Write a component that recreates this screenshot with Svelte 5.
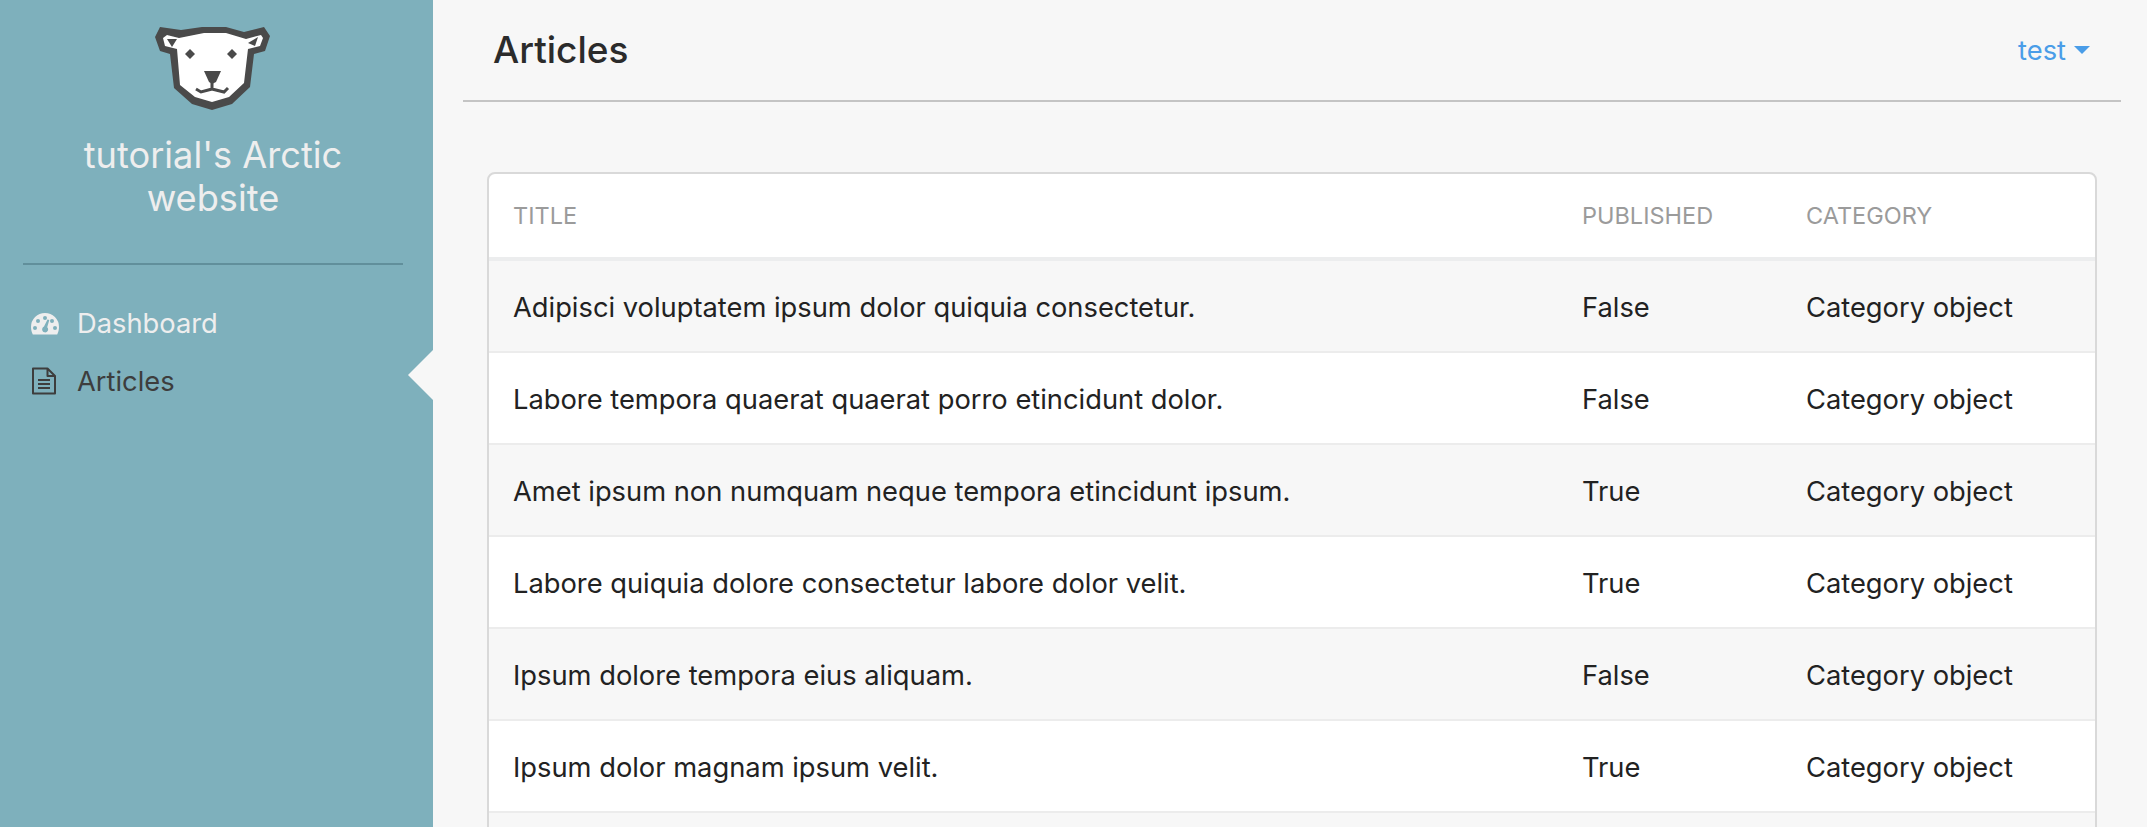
<script>
	const rows = [
		{ title: 'Adipisci voluptatem ipsum dolor quiquia consectetur.', published: 'False' },
		{ title: 'Labore tempora quaerat quaerat porro etincidunt dolor.', published: 'False' },
		{ title: 'Amet ipsum non numquam neque tempora etincidunt ipsum.', published: 'True' },
		{ title: 'Labore quiquia dolore consectetur labore dolor velit.', published: 'True' },
		{ title: 'Ipsum dolore tempora eius aliquam.', published: 'False' },
		{ title: 'Ipsum dolor magnam ipsum velit.', published: 'True' }
	];
</script>

<div class="page">
	<aside class="sidebar">
		<div class="brand">
			<svg class="logo" viewBox="155 25 118 87" width="118" height="87" aria-hidden="true">
				<polygon fill="#4a4a4a" points="161,27 182,30 203,27 227,27 245,32 265,27 271,36 266,51 255,54 251,87 233,104 213,110 193,104 175,88 171,54 161,51 156,37" />
				<polygon fill="#fff" points="164,38 168,35 180,38 205,33 227,33 247,39 262,35 264,38 261,46 249,49 245,83 230,97 213,102 196,97 181,85 178,49 166,46" />
				<polygon fill="#4a4a4a" points="168,39 178,39 173,47" />
				<polygon fill="#4a4a4a" points="249,43 259,37 256,46" />
				<polygon fill="#4a4a4a" points="191,49 196,54 191,59 186,54" />
				<polygon fill="#4a4a4a" points="233,49 238,54 233,59 228,54" />
				<polygon fill="#4a4a4a" points="205,71 222,71 217,82 213,84 210,82" />
				<path d="M197 89 L202 92 L213 89 L213 83 L213 89 L225 92 L229 88" fill="none" stroke="#4a4a4a" stroke-width="3" />
			</svg>
			<h1>tutorial's Arctic website</h1>
		</div>
		<nav>
			<a href="#dashboard" class="item">
				<svg class="icon" viewBox="0 0 28 24" width="28" height="24" aria-hidden="true">
					<path fill="#eee" fill-rule="evenodd" d="M14 2a14 14 0 0 1 14 14c0 2.800-.7 5.200-1.800 7.500H1.800C.7 21.200 0 18.800 0 16A14 14 0 0 1 14 2zM14 5a2 2 0 1 0 0 4a2 2 0 0 0 0-4zM7 8a2 2 0 1 0 0 4a2 2 0 0 0 0-4zM21 8a2 2 0 1 0 0 4a2 2 0 0 0 0-4zM4 15a2 2 0 1 0 0 4a2 2 0 0 0 0-4zM24 15a2 2 0 1 0 0 4a2 2 0 0 0 0-4zM16.500 8.500L13 15.600a3 3 0 1 0 3.200 .6L18.300 9z" />
				</svg>
				<span>Dashboard</span>
			</a>
			<a href="#articles" class="item active">
				<svg class="icon" viewBox="0 0 26 28" width="26" height="28" aria-hidden="true">
					<path fill="none" stroke="#3d3d3d" stroke-width="2" stroke-linejoin="round" d="M2 1.500H16.500L24 9V26.500H2zM16.500 1.500V9H24" />
					<path fill="none" stroke="#3d3d3d" stroke-width="2" d="M7 13H19M7 17H19M7 21H19" />
				</svg>
				<span>Articles</span>
			</a>
		</nav>
	</aside>

	<main class="content">
		<header class="topbar">
			<h2>Articles</h2>
			<a href="#user" class="user">test<span class="caret"></span></a>
		</header>
		<section class="card">
			<table>
				<thead>
					<tr>
						<th>Title</th>
						<th>Published</th>
						<th>Category</th>
					</tr>
				</thead>
				<tbody>
					{#each rows as row}
						<tr>
							<td>{row.title}</td>
							<td>{row.published}</td>
							<td>Category object</td>
						</tr>
					{/each}
					<tr><td></td><td></td><td></td></tr>
				</tbody>
			</table>
		</section>
	</main>
</div>

<style>
	:global(body) { margin: 0; background: #f7f7f7; font-family: Inter, "Liberation Sans", sans-serif; }
	.page { display: flex; height: 100vh; overflow: hidden; background: #f7f7f7; }
	.sidebar { flex: 0 0 433px; box-sizing: border-box; padding: 0 30px 0 23px; background: #7eb0bc; }
	.brand { display: flex; flex-direction: column; align-items: center; padding-top: 25px; height: 238px; border-bottom: 2px solid #618f9b; }
	.logo { display: block; }
	.brand h1 { margin: 22px 0 0; width: 300px; font-size: 36.2px; line-height: 43px; font-weight: 400; text-align: center; color: #eee; }
	nav { display: flex; flex-direction: column; padding-top: 29px; }
	.item { position: relative; display: flex; align-items: center; height: 58px; padding-left: 8px; font-size: 27.3px; color: #eee; text-decoration: none; }
	.item span { margin-left: 18px; }
	.item.active { color: #3d3d3d; }
	.item.active span { margin-left: 20px; }
	.item.active::after { content: ''; position: absolute; right: -30px; top: -2px; border-style: solid; border-width: 25px 25px 25px 0; border-color: transparent #f7f7f7 transparent transparent; }
	.content { flex: 1; min-width: 0; padding: 0 26px 0 30px; }
	.topbar { display: flex; align-items: center; justify-content: space-between; height: 100px; padding: 0 31px 0 30px; border-bottom: 2px solid #c4c4c4; }
	.topbar h2 { margin: 0 0 2px; font-size: 37px; font-weight: 500; color: #2b2b2b; }
	.user { display: flex; align-items: center; font-size: 27.3px; color: #4a9de8; text-decoration: none; }
	.caret { margin-left: 8px; border-style: solid; border-width: 8px 8px 0; border-color: #4a9de8 transparent transparent; }
	.card { margin: 70px 24px 0; background: #fff; border: 2px solid #d9d9d9; border-radius: 8px; overflow: hidden; }
	table { width: 100%; border-collapse: separate; border-spacing: 0; table-layout: fixed; }
	th { box-sizing: border-box; height: 87px; padding: 0 0 1px 24px; text-align: left; font-size: 23.5px; font-weight: 400; text-transform: uppercase; color: #9b9b9b; border-bottom: 4px solid #ecedee; }
	th:nth-child(2) { width: 224px; }
	th:nth-child(3) { width: 313px; }
	td { box-sizing: border-box; height: 92px; padding: 2px 0 0 24px; font-size: 27.3px; color: #222; border-bottom: 2px solid #ececec; }
	tbody tr:nth-child(odd) { background: #f7f7f7; }
</style>
